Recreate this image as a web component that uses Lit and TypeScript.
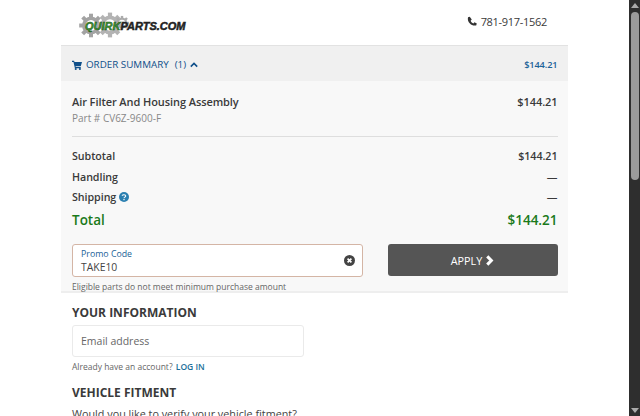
import { LitElement, html, css, svg } from "lit";
import { customElement } from "lit/decorators.js";

const gear = (cx: number, cy: number, r: number, fill: string) => {
  const teeth = [];
  for (let i = 0; i < 8; i++) {
    teeth.push(svg`<rect x=${cx - r * 0.2} y=${cy - r * 1.18} width=${r * 0.4} height=${r * 0.5} fill=${fill} transform=${`rotate(${i * 45} ${cx} ${cy})`}></rect>`);
  }
  return svg`${teeth}<circle cx=${cx} cy=${cy} r=${r * 0.72} fill="none" stroke=${fill} stroke-width=${r * 0.36}></circle>`;
};

@customElement("app-root")
export class AppRoot extends LitElement {
  static styles = css`
    :host {
      display: block;
      height: 416px;
      overflow: hidden;
      background: #fff;
      font-family: "Open Sans", sans-serif;
      color: #3a3a3a;
      position: relative;
    }
    .page { width: 630px; display: flex; flex-direction: column; align-items: center; }
    .wrap { width: 507px; margin-left: -1px; }
    .top { height: 45px; display: flex; justify-content: space-between; box-sizing: border-box; padding: 0 21px 0 17px; }
    .logo { position: relative; width: 108px; height: 30px; margin-top: 10px; }
    .logo svg { position: absolute; left: 0; top: 0; }
    .logo-text { position: absolute; left: 7px; top: 3px; font: italic 700 11px/26px "Liberation Sans", sans-serif; color: #222; white-space: nowrap; -webkit-text-stroke: 0.5px #222; }
    .logo-text b { color: #3f9a35; -webkit-text-stroke: 0.5px #174d14; font-weight: 700; }
    .phone { display: flex; align-items: center; gap: 4px; height: 42px; margin-left: -1px; font-size: 11px; font-weight: 500; letter-spacing: -0.3px; color: #3a3a3a; }
    .bar { height: 36px; background: #f0f0f0; border-top: 1px solid #e2e2e2; box-sizing: border-box; display: flex; align-items: center; justify-content: space-between; padding: 2px 10.5px 0 11px; color: #0f4f8a; font-size: 9.8px; font-weight: 500; }
    .bar-left { display: flex; align-items: center; }
    .bar-left svg { margin-right: 4px; }
    .chev { margin-left: -1px; }
    .bar-price { font-size: 9.2px; font-weight: 600; letter-spacing: -0.1px; color: #1b6298; }
    .count { margin-left: 6px; margin-right: 5px; }
    .summary { background: #f8f8f8; padding: 0 10.5px 0 11px; height: 212px; box-sizing: border-box; border-bottom: 2px solid #eee; }
    .item { display: flex; justify-content: space-between; padding-top: 12px; height: 56px; box-sizing: border-box; border-bottom: 1px solid #dedede; font-size: 11px; font-weight: 550; letter-spacing: -0.08px; line-height: 17px; }
    .part { font-weight: 400; color: #888; font-size: 10px; letter-spacing: 0; line-height: 17px; }
    .rows { padding-top: 9px; }
    .row { display: flex; justify-content: space-between; align-items: center; height: 20.5px; font-size: 10.7px; font-weight: 550; letter-spacing: -0.05px; }
    .row .label { display: flex; align-items: center; gap: 3px; }
    .total { color: #1a7a1a; font-size: 13.5px; font-weight: 600; letter-spacing: 0; height: 25px; }
    .promo-row { display: flex; justify-content: space-between; margin-top: 11px; }
    .promo { width: 291px; height: 33px; box-sizing: border-box; border: 1px solid #d4b5a5; border-radius: 3px; background: #fff; padding: 3px 8px 0; position: relative; }
    .promo-label { font-size: 8.8px; line-height: 12px; color: #1b6298; }
    .promo-value { font-size: 10.4px; line-height: 14px; color: #444; }
    .clear { position: absolute; right: 7px; top: 10px; }
    .apply { width: 170px; height: 32px; border-radius: 3px; background: #555; color: #fff; display: flex; align-items: center; justify-content: center; gap: 3px; padding-top: 1px; box-sizing: border-box; font-size: 10.8px; }
    .hint { font-size: 8.5px; color: #666; line-height: 14px; margin-top: 3px; }
    .info { padding: 0 11px; }
    h2 { margin: 0; font-size: 12px; font-weight: 700; color: #3a3a3a; line-height: 18px; }
    .info h2.first { margin-top: 11px; }
    .email { width: 232px; height: 32px; box-sizing: border-box; border: 1px solid #eaeaea; border-radius: 3px; margin-top: 3px; padding-left: 8px; display: flex; align-items: center; font-size: 10.5px; color: #666; }
    .acct { font-size: 8.5px; color: #666; line-height: 14px; margin-top: 3px; }
    .acct a { color: #1b6f9a; font-weight: 600; margin-left: 1px; }
    .veh { margin-top: 9.5px; }
    .q { font-size: 10.8px; color: #444; line-height: 17px; margin-top: 3px; white-space: nowrap; }
    .sb { position: absolute; right: 0; top: 0; bottom: 0; width: 11px; background: #2e2e2e; }
    .thumb { position: absolute; left: 2px; right: 1px; top: 12px; height: 168px; background: #9b9b9b; border-radius: 4px; }
    .arr { position: absolute; left: 2px; width: 0; height: 0; border-left: 4px solid transparent; border-right: 4px solid transparent; }
    .up { top: 3px; border-bottom: 5px solid #aaa; }
    .down { bottom: 3px; border-top: 5px solid #aaa; }
  `;

  render() {
    return html`
      <div class="page"><div class="wrap">
        <div class="top">
          <div class="logo">
            <svg width="60" height="30" viewBox="0 0 60 30">
              ${gear(13, 15.5, 10, "#a3a3a3")}
              ${gear(32, 15, 10.5, "#b3b3b3")}
              ${gear(44, 13, 6, "#ababab")}
            </svg>
            <span class="logo-text"><b>QUIRK</b>PARTS.COM</span>
          </div>
          <div class="phone">
            <svg width="10" height="10" viewBox="0 0 24 24"><path fill="#333" d="M6.6 1.5 2.4 3C1 9 3 14 7 18s9 6 15 4.6l1.5-4.4-5.6-3-2.6 2.6c-3-1.3-5.2-3.6-6.6-6.6l2.7-2.6z"/></svg>
            781-917-1562
          </div>
        </div>
        <div class="bar">
          <div class="bar-left">
            <svg width="10" height="10" viewBox="0 0 24 24"><path fill="#0f4f8a" d="M0 2h5l1 3h18l-3 10H8.5l.5 2h12v2.5H7L3.5 4.5H0z"/><circle cx="9" cy="21.5" r="2.5" fill="#0f4f8a"/><circle cx="19" cy="21.5" r="2.5" fill="#0f4f8a"/></svg>
            ORDER SUMMARY
            <span class="count">(1)</span>
            <svg class="chev" width="8" height="8" viewBox="0 0 10 10"><path d="M1 7 5 3l4 4" fill="none" stroke="#0f4f8a" stroke-width="2"/></svg>
          </div>
          <div class="bar-price">$144.21</div>
        </div>
        <div class="summary">
          <div class="item">
            <div>Air Filter And Housing Assembly<div class="part">Part # CV6Z-9600-F</div></div>
            <div>$144.21</div>
          </div>
          <div class="rows">
            <div class="row"><span>Subtotal</span><span>$144.21</span></div>
            <div class="row"><span>Handling</span><span>—</span></div>
            <div class="row"><span class="label">Shipping
              <svg width="10" height="10" viewBox="0 0 20 20"><circle cx="10" cy="10" r="10" fill="#2a7fb0"/><path d="M6.5 7.5C6.5 5 13.5 4.8 13.5 8c0 2.5-3.5 2-3.5 4.5" fill="none" stroke="#fff" stroke-width="2.2"/><rect x="8.8" y="14" width="2.4" height="2.4" fill="#fff"/></svg>
            </span><span>—</span></div>
            <div class="row total"><span>Total</span><span>$144.21</span></div>
          </div>
          <div class="promo-row">
            <div class="promo">
              <div class="promo-label">Promo Code</div>
              <div class="promo-value">TAKE10</div>
              <svg class="clear" width="11" height="11" viewBox="0 0 20 20"><circle cx="10" cy="10" r="10" fill="#444"/><path d="M6.5 6.5l7 7M13.5 6.5l-7 7" stroke="#fff" stroke-width="3"/></svg>
            </div>
            <div class="apply">APPLY
              <svg width="9" height="11" viewBox="0 0 10 12"><path d="M2.5 1.5 7 6l-4.5 4.5" fill="none" stroke="#fff" stroke-width="3.4"/></svg>
            </div>
          </div>
          <div class="hint">Eligible parts do not meet minimum purchase amount</div>
        </div>
        <div class="info">
          <h2 class="first">YOUR INFORMATION</h2>
          <div class="email">Email address</div>
          <div class="acct">Already have an account? <a>LOG IN</a></div>
          <h2 class="veh">VEHICLE FITMENT</h2>
          <div class="q">Would you like to verify your vehicle fitment?</div>
        </div>
      </div></div>
      <div class="sb"><div class="arr up"></div><div class="thumb"></div><div class="arr down"></div></div>
    `;
  }
}
